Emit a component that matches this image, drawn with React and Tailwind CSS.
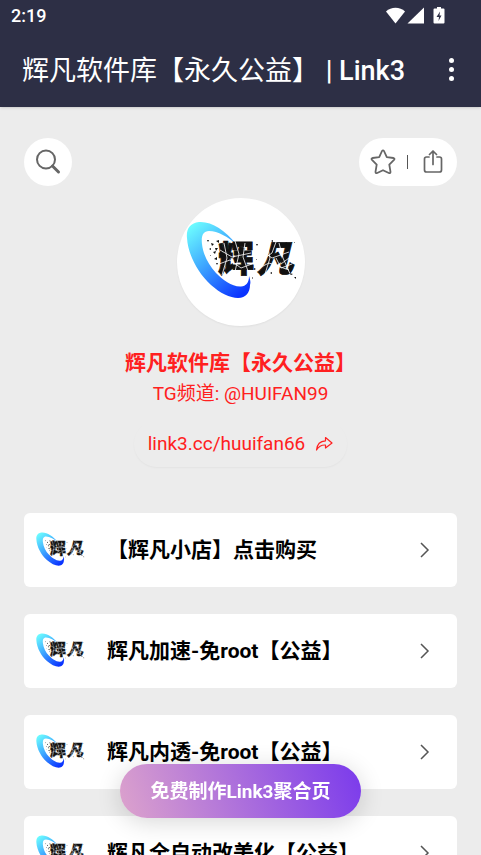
import React from "react";

const links = [
  { id: 1, title: "【辉凡小店】点击购买" },
  { id: 2, title: "辉凡加速-免root【公益】" },
  { id: 3, title: "辉凡内透-免root【公益】" },
  { id: 4, title: "辉凡全自动改美化【公益】" },
];

const Logo = ({ id, className }) => (
  <svg viewBox="0 0 128 128" className={className} role="img" aria-label="logo">
    <defs>
      <linearGradient id={id} x1="0.1" y1="0" x2="0.8" y2="1">
        <stop offset="0" stopColor="#6effff" />
        <stop offset="0.45" stopColor="#3fa9ff" />
        <stop offset="1" stopColor="#0a32ff" />
      </linearGradient>
    </defs>
    <path
      d="M59 46C48 32 34 23 22 24C13 25 9 31 10 40C11 57 21 75 34 87C43 95 53 100 61 100C69 100 73 94 73 87C74 84 73 81 72 78C72 85 69 88 64 88.500C55 89 46 82 39 75C31 66 26 56 25 46C24 38 26 33 32 33C41 33 51 39 59 46Z"
      fill={`url(#${id})`}
    />
    <g
      fill="#111"
      stroke="#111"
      strokeWidth="0.8"
      fontSize="36"
      fontWeight="900"
      className="font-['Noto_Sans_CJK_SC',sans-serif]"
    >
      <text x="41" y="74">辉</text>
      <text x="80" y="74" fontStyle="italic">凡</text>
    </g>
    {/* cracks */}
    <path
      d="M43 52L55 59L74 55M42 66L53 62L64 70L75 66M58 43L62 56L57 78M68 45L66 59L72 76M47 45L50 60L45 77M84 52L95 60L112 54M82 70L92 65L112 72M102 45L106 60L114 78M90 46L93 60L88 76M99 60L104 70L115 66M85 62L95 55L99 44M104 66L112 60"
      fill="none"
      stroke="#fff"
      strokeWidth="0.8"
    />
    {/* debris */}
    <path
      d="M30 42l2 0l-1 2zM34 45l3 1l-2 2zM39 43l3-1l0 3zM32 51l2-1l0 2zM36 54l3-1l-1 3zM38 50l3 0l-2 3zM37 61l3-2l0 3zM39 65l2 0l-1 2zM33 57l1 0l0 1zM79 46l2 0l-1 2zM79 61l1 0l0 1zM77 70l2 1l-2 1zM75 80l1-1l0 2zM94 43l2-1l0 2zM117 44l1 0l0 1zM108 45l2-1l-1 3zM112 75l4 1l-2 1zM117 79l2 0l0 2zM93 75l2-1l0 2z"
      fill="#111"
    />
  </svg>
);

const StatusBar = () => (
  <div className="flex h-8 items-center justify-between pl-[11px] pr-[35px]">
    <span className="text-lg font-medium">2:19</span>
    <svg viewBox="0 0 60 18" className="h-[18px] w-[60px]" fill="#fff" aria-hidden="true">
      <path d="M0 4.500C5-0.500 14-0.500 19 4.500L9.500 16.500Z" />
      <path d="M38 0.500V16.500H21.500Z" />
      <path d="M51 0h4v1.500h2.500q1 0 1 1v13q0 1-1 1h-9q-1 0-1-1V2.500q0-1 1-1H51z" />
      <path d="M54 4.500L50.500 10h2.500L52.500 14l3-5.500H53.500z" fill="#2d2f45" />
    </svg>
  </div>
);

const SearchIcon = () => (
  <svg viewBox="0 0 26 26" className="h-[26px] w-[26px]" fill="none" stroke="#666" aria-hidden="true">
    <circle cx="11" cy="10.500" r="9" strokeWidth="2" />
    <path d="M17.500 17L23.500 23" strokeWidth="3" strokeLinecap="round" />
  </svg>
);

const StarIcon = () => (
  <svg viewBox="0 0 26 26" className="h-[26px] w-[26px]" fill="none" stroke="#666" strokeWidth="1.8" strokeLinejoin="round" aria-hidden="true">
    <path d="M12 2Q13 .8 14 2L16.800 8.200L23.500 9Q25.200 9.500 24 10.800L19.300 15.600L20.500 22.800Q20.500 24.600 18.800 24L13 21.200L7.200 24Q5.500 24.600 5.500 22.800L6.700 15.600L2 10.800Q.8 9.500 2.500 9L9.200 8.200Z" />
  </svg>
);

const ShareIcon = () => (
  <svg viewBox="0 0 20 24" className="h-6 w-5" fill="none" stroke="#666" strokeWidth="1.700" strokeLinecap="round" strokeLinejoin="round" aria-hidden="true">
    <path d="M6 7H3.500Q1.500 7 1.500 9V20Q1.500 22 3.500 22H16.500Q18.500 22 18.500 20V9Q18.500 7 16.500 7H14" />
    <path d="M10 14.500V1.500M6.500 4.500L10 1L13.500 4.500" />
  </svg>
);

const ForwardIcon = () => (
  <svg viewBox="0 0 18 16" className="h-4 w-[18px]" fill="none" stroke="#ff2020" strokeWidth="1.200" strokeLinejoin="round" aria-hidden="true">
    <path d="M10.500 1.500L17 7L10.500 12V9C6.500 8.800 3.500 10.500 1.500 14C2 9 5 5 10.500 4.800Z" />
  </svg>
);

const LinkCard = ({ link }) => (
  <a href="#" className="flex h-[74px] shrink-0 items-center rounded-md bg-white pl-2 pr-[26px]">
    <Logo id={`ring-${link.id}`} className="h-14 w-14 shrink-0" />
    <span className="ml-[19px] flex-1 truncate text-[21px] leading-8 font-bold text-black">
      {link.title}
    </span>
    <svg viewBox="0 0 12 16" className="h-4 w-3" fill="none" stroke="#555" strokeWidth="1.500" aria-hidden="true">
      <path d="M2 1L9 8L2 15" />
    </svg>
  </a>
);

const App = () => {
  return (
    <div className="flex h-screen flex-col bg-[#ececec] font-[Roboto,'Noto_Sans_CJK_SC',sans-serif]">
      <header className="relative z-10 bg-[#2d2f45] text-white shadow-sm">
        <StatusBar />
        <div className="flex h-[75px] items-center justify-between pl-[22px] pr-5">
          <h1 className="truncate pt-0.5 text-[27px] leading-10">
            辉凡软件库【永久公益】 <span className="font-medium">| Link3</span>
          </h1>
          <button type="button" aria-label="更多" className="flex w-5 flex-col items-center gap-1">
            <span className="h-[5px] w-[5px] rounded-full bg-white" />
            <span className="h-[5px] w-[5px] rounded-full bg-white" />
            <span className="h-[5px] w-[5px] rounded-full bg-white" />
          </button>
        </div>
      </header>

      <main className="flex-1 overflow-y-auto px-6 pt-[31px] pb-28 [scrollbar-width:none]">
        <div className="flex justify-between">
          <button type="button" aria-label="搜索" className="flex h-12 w-12 items-center justify-center rounded-full bg-white">
            <SearchIcon />
          </button>
          <div className="flex h-12 items-center gap-[11px] rounded-full bg-white pl-[11px] pr-3.5">
            <button type="button" aria-label="收藏">
              <StarIcon />
            </button>
            <span className="h-3.5 w-px bg-[#555]" />
            <button type="button" aria-label="分享" className="pl-1">
              <ShareIcon />
            </button>
          </div>
        </div>

        <section className="mt-3 flex flex-col items-center text-[#ff2020]">
          <div className="h-32 w-32 overflow-hidden rounded-full bg-white shadow-xs">
            <Logo id="ring-main" className="h-32 w-32" />
          </div>
          <h2 className="mt-[22px] text-[21px] leading-[30px] font-bold">辉凡软件库【永久公益】</h2>
          <p className="text-[19px] leading-[31px]">TG频道: @HUIFAN99</p>
          <a
            href="#"
            className="mt-3 flex h-[46px] items-center gap-2.5 rounded-full px-3.5 text-[19px] shadow-[0_1px_2px_rgba(0,0,0,0.04)]"
          >
            link3.cc/huuifan66
            <ForwardIcon />
          </a>
        </section>

        <nav className="mt-[46px] flex flex-col gap-[27px]">
          {links.map((link) => (
            <LinkCard key={link.id} link={link} />
          ))}
        </nav>
      </main>

      <div className="pointer-events-none fixed inset-x-0 bottom-[37px] z-20 flex justify-center">
        <button
          type="button"
          className="pointer-events-auto h-[54px] rounded-full bg-[linear-gradient(70deg,#dda3cc,#7a3aec)] px-[30px] pt-0.5 text-[19px] font-bold text-white shadow-[0_4px_24px_rgba(0,0,0,0.16)]"
        >
          免费制作Link3聚合页
        </button>
      </div>
    </div>
  );
};

export default App;
